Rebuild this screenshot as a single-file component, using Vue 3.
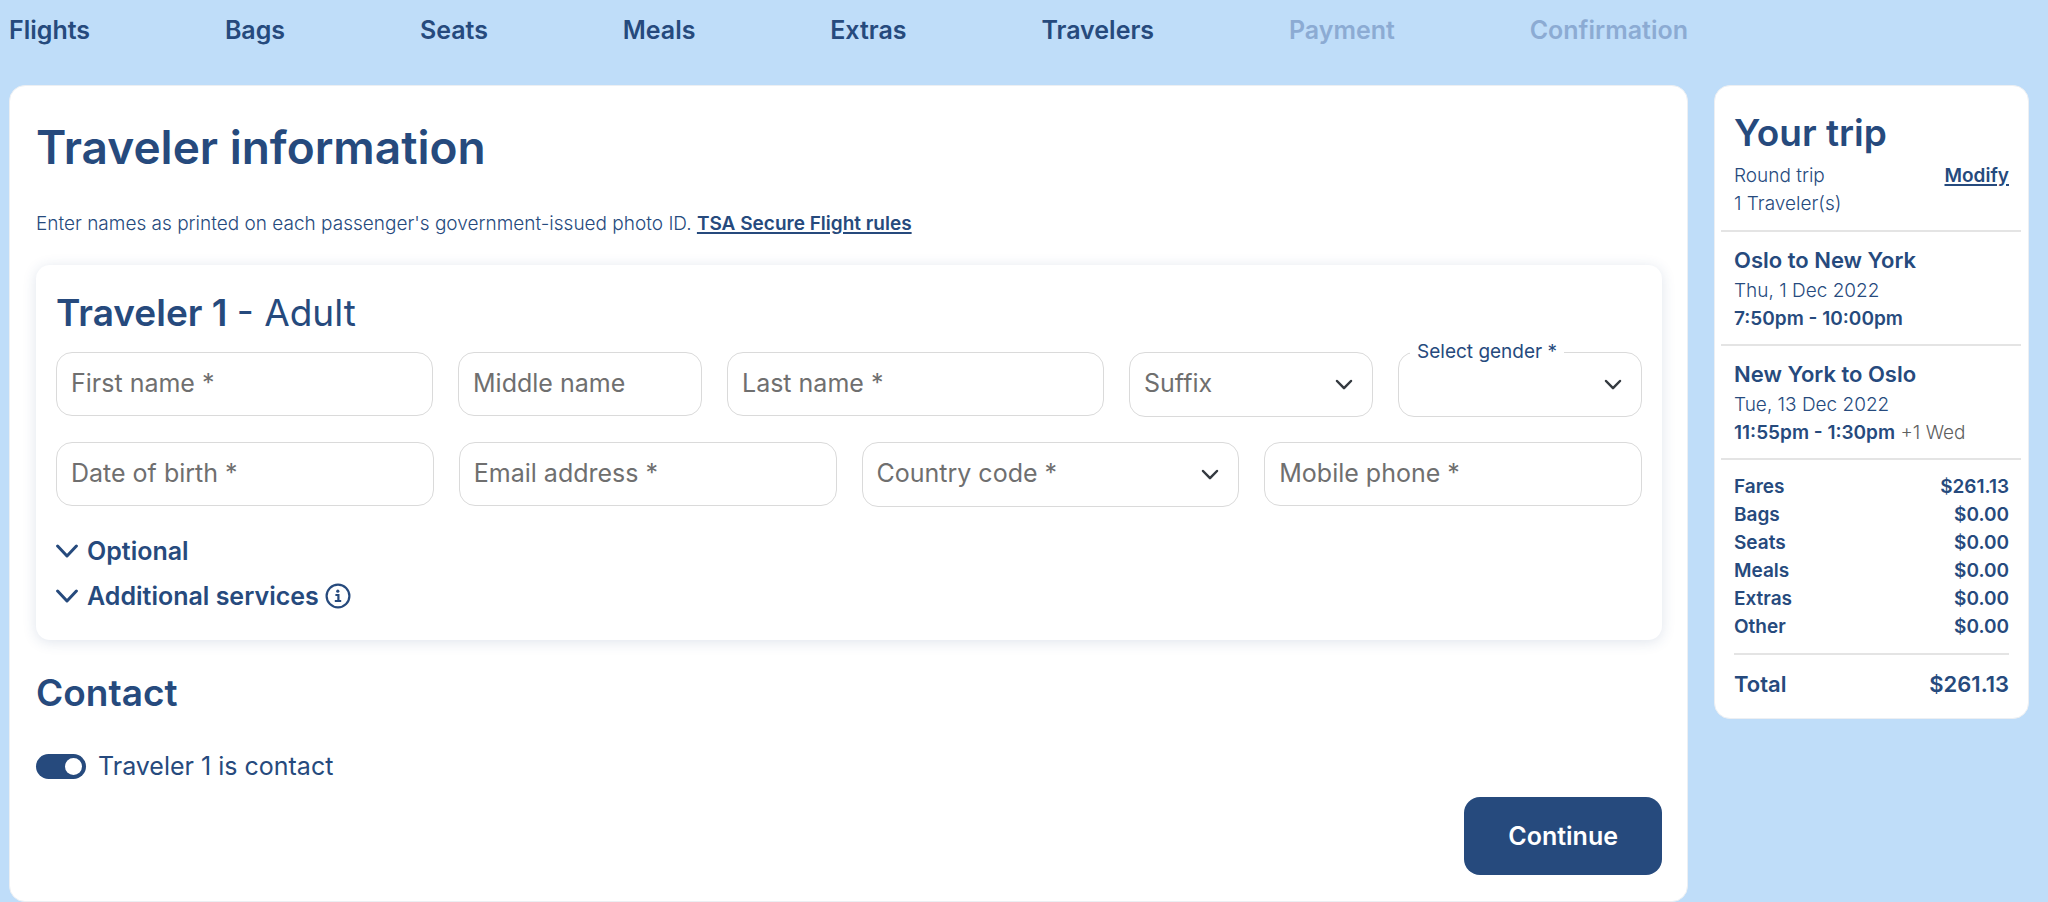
<script setup>
import { ref } from 'vue'

const steps = [
  { name: 'Flights', open: true },
  { name: 'Bags', open: true },
  { name: 'Seats', open: true },
  { name: 'Meals', open: true },
  { name: 'Extras', open: true },
  { name: 'Travelers', open: true },
  { name: 'Payment', open: false },
  { name: 'Confirmation', open: false },
]

const nameFields = [
  { id: 'first-name', label: 'First name *', type: 'text' },
  { id: 'middle-name', label: 'Middle name', type: 'text' },
  { id: 'last-name', label: 'Last name *', type: 'text' },
  { id: 'suffix', label: 'Suffix', options: ['Jr.', 'Sr.', 'II', 'III'] },
  { id: 'gender', label: 'Select gender *', options: ['Female', 'Male'], raised: true },
]

const contactFields = [
  { id: 'birth-date', label: 'Date of birth *', type: 'text' },
  { id: 'email', label: 'Email address *', type: 'email' },
  { id: 'country-code', label: 'Country code *', options: ['+1', '+44', '+47'] },
  { id: 'phone', label: 'Mobile phone *', type: 'tel' },
]

const rows = [
  { key: 'names', fields: nameFields },
  { key: 'contact', fields: contactFields },
]

const values = ref({
  'first-name': '', 'middle-name': '', 'last-name': '', suffix: '', gender: '',
  'birth-date': '', email: '', 'country-code': '', phone: '',
})

const isContact = ref(true)

const flights = [
  { route: 'Oslo to New York', date: 'Thu, 1 Dec 2022', time: '7:50pm - 10:00pm', extra: '' },
  { route: 'New York to Oslo', date: 'Tue, 13 Dec 2022', time: '11:55pm - 1:30pm', extra: '+1 Wed' },
]

const costs = [
  ['Fares', '$261.13'],
  ['Bags', '$0.00'],
  ['Seats', '$0.00'],
  ['Meals', '$0.00'],
  ['Extras', '$0.00'],
  ['Other', '$0.00'],
]
</script>

<template>
  <div class="page">
    <nav class="steps" aria-label="Booking steps">
      <template v-for="step in steps" :key="step.name">
        <a v-if="step.open" class="step" href="#">{{ step.name }}</a>
        <span v-else class="step step-locked">{{ step.name }}</span>
      </template>
    </nav>

    <main class="panel main">
      <h1>Traveler information</h1>
      <p class="intro">
        Enter names as printed on each passenger's government-issued photo ID.
        <a class="link" href="#">TSA Secure Flight rules</a>
      </p>

      <section class="traveler">
        <h2 class="traveler-title">Traveler 1 <span>- Adult</span></h2>

        <div v-for="row in rows" :key="row.key" class="row" :class="`row-${row.key}`">
          <div v-for="f in row.fields" :key="f.id" class="field">
            <template v-if="f.options">
              <select :id="f.id" v-model="values[f.id]" class="control control-select">
                <option value=""></option>
                <option v-for="o in f.options" :key="o" :value="o">{{ o }}</option>
              </select>
              <svg class="caret" viewBox="0 0 18 12" aria-hidden="true">
                <path d="M2 2 L9 9.2 L16 2" />
              </svg>
            </template>
            <input v-else :id="f.id" v-model="values[f.id]" class="control" :type="f.type" />
            <label :for="f.id" :class="{ raised: f.raised || values[f.id] }">{{ f.label }}</label>
          </div>
        </div>

        <div class="expanders">
          <button type="button" class="expander">
            <svg class="chevron" viewBox="0 0 22 14" aria-hidden="true"><path d="M1.6 2 L11 12 L20.4 2" /></svg>
            Optional
          </button>
          <div class="expander-line">
            <button type="button" class="expander">
              <svg class="chevron" viewBox="0 0 22 14" aria-hidden="true"><path d="M1.6 2 L11 12 L20.4 2" /></svg>
              Additional services
            </button>
            <button type="button" class="info" aria-label="About additional services">
              <svg viewBox="0 0 26 26" aria-hidden="true">
                <circle cx="13" cy="13" r="11.4" />
                <circle class="dot" cx="12.8" cy="8.2" r="1.6" />
                <path d="M10.4 12 H13.4 V18 M9.8 18 H16.2" />
              </svg>
            </button>
          </div>
        </div>
      </section>

      <h2 class="contact-title">Contact</h2>
      <label class="toggle" for="is-contact">
        <input id="is-contact" v-model="isContact" type="checkbox" />
        Traveler 1 is contact
      </label>
      <div class="actions">
        <button type="button" class="continue">Continue</button>
      </div>
    </main>

    <aside class="panel trip">
      <div class="trip-block trip-head">
        <h2>Your trip</h2>
        <div class="pair">
          <span>Round trip</span>
          <a class="link" href="#">Modify</a>
        </div>
        <div>1 Traveler(s)</div>
      </div>
      <div v-for="f in flights" :key="f.route" class="trip-block">
        <h3>{{ f.route }}</h3>
        <div>{{ f.date }}</div>
        <div><strong>{{ f.time }}</strong> <span v-if="f.extra" class="next-day">{{ f.extra }}</span></div>
      </div>
      <div class="trip-block trip-costs">
        <table>
          <tbody>
            <tr v-for="[name, amount] in costs" :key="name">
              <th scope="row">{{ name }}</th>
              <td>{{ amount }}</td>
            </tr>
          </tbody>
          <tfoot>
            <tr>
              <th scope="row">Total</th>
              <td>$261.13</td>
            </tr>
          </tfoot>
        </table>
      </div>
    </aside>
  </div>
</template>

<style>
body {
  margin: 0;
  background: #bfddf9;
}
</style>

<style scoped>
.page {
  --navy: #264a7d;
  --line: #e4e4e4;
  display: grid;
  grid-template-columns: minmax(0, 1fr) 315px;
  column-gap: 26px;
  align-items: start;
  padding: 0 19px 0 9px;
  color: var(--navy);
  font-family: Inter, "Liberation Sans", sans-serif;
  font-size: 19px;
  font-weight: 300;
  line-height: 28px;
}

.page *,
.page *::before {
  box-sizing: border-box;
}

h1,
h2,
h3,
p {
  margin: 0;
  font-weight: 600;
}

button {
  padding: 0;
  border: 0;
  background: none;
  color: inherit;
  font: inherit;
  cursor: pointer;
}

.steps {
  display: flex;
  justify-content: space-between;
  padding: 15px 0 40px;
  font-size: 25px;
  font-weight: 600;
  line-height: 30px;
}

.step {
  color: var(--navy);
  text-decoration: none;
}

.step-locked {
  color: #8cabd3;
}

.panel {
  grid-row: 2;
  border: 1px solid #eceff3;
  border-radius: 16px;
  background: #fff;
}

.main {
  padding: 32px 25px 26px 26px;
}

h1 {
  font-size: 46px;
  line-height: 58px;
}

.intro {
  margin: 34px 0 27px;
  font-weight: 300;
}

.link {
  color: var(--navy);
  font-weight: 600;
  text-decoration-thickness: 2px;
  text-underline-offset: 2px;
}

.traveler {
  padding: 24px 20px 29px;
  border-radius: 14px;
  box-shadow: 0 2px 14px rgba(38, 74, 125, 0.15);
}

.traveler-title {
  margin-bottom: 16px;
  font-size: 37px;
  line-height: 47px;
}

.traveler-title span {
  font-weight: 400;
}

.row {
  display: grid;
  gap: 25px;
  margin-bottom: 25px;
}

.row-names {
  grid-template-columns: 17fr 11fr 17fr 11fr 11fr;
}

.row-contact {
  grid-template-columns: repeat(4, 1fr);
}

.field {
  position: relative;
  display: flex;
  align-items: flex-start;
  height: 65px;
}

.control {
  width: 100%;
  height: 64px;
  padding: 0 15px;
  border: 1px solid #dadada;
  border-radius: 16px;
  background: #fff;
  color: var(--navy);
  font: inherit;
  font-size: 25px;
}

.control-select {
  height: 65px;
  appearance: none;
}

.field label {
  position: absolute;
  top: 16px;
  left: 15px;
  color: #6f6f6f;
  font-size: 25px;
  font-weight: 400;
  line-height: 30px;
  pointer-events: none;
}

.field .raised {
  top: -14px;
  left: 12px;
  padding: 0 7px;
  background: #fff;
  color: var(--navy);
  font-size: 19px;
  line-height: 28px;
}

.caret {
  position: absolute;
  top: 27px;
  right: 20px;
  width: 18px;
  height: 12px;
  fill: none;
  stroke: #343a40;
  stroke-width: 2.5;
  stroke-linecap: round;
  stroke-linejoin: round;
  pointer-events: none;
}

.expanders {
  display: grid;
  justify-items: start;
  gap: 15px;
  padding-top: 4px;
}

.expander {
  display: flex;
  align-items: center;
  gap: 9px;
  font-size: 25px;
  font-weight: 600;
  line-height: 30px;
}

.expander-line {
  display: flex;
  align-items: center;
  gap: 6px;
}

.chevron {
  width: 22px;
  height: 14px;
  fill: none;
  stroke: var(--navy);
  stroke-width: 3;
  stroke-linecap: round;
  stroke-linejoin: round;
}

.info {
  display: flex;
}

.info svg {
  width: 26px;
  height: 26px;
  fill: none;
  stroke: var(--navy);
  stroke-width: 2.2;
}

.info .dot {
  fill: var(--navy);
  stroke: none;
}

.contact-title {
  margin: 30px 0 35px;
  font-size: 37px;
  line-height: 46px;
}

.toggle {
  display: flex;
  align-items: center;
  gap: 12px;
  width: fit-content;
  font-size: 25px;
  font-weight: 400;
  line-height: 30px;
}

.toggle input {
  display: flex;
  align-items: center;
  width: 50px;
  height: 25px;
  margin: 0;
  padding: 0 4px;
  border-radius: 13px;
  background: #8cabd3;
  appearance: none;
}

.toggle input::before {
  width: 17px;
  height: 17px;
  border-radius: 50%;
  background: #fff;
  content: "";
}

.toggle input:checked {
  justify-content: flex-end;
  background: var(--navy);
}

.actions {
  display: flex;
  justify-content: flex-end;
  margin-top: 16px;
}

.continue {
  padding: 24px 44px;
  border-radius: 16px;
  background: var(--navy);
  color: #fff;
  font-size: 25px;
  font-weight: 600;
  line-height: 30px;
}

.trip {
  padding: 24px 7px 19px 6px;
}

.trip-block {
  padding: 13px 12px 11px 13px;
  border-top: 2px solid var(--line);
}

.trip-block h3 {
  margin-bottom: 2px;
  font-size: 22px;
  line-height: 30px;
}

.trip-head {
  padding-top: 0;
  padding-bottom: 12px;
  border-top: 0;
}

.trip-head h2 {
  margin-bottom: 6px;
  font-size: 37px;
  line-height: 46px;
}

.pair {
  display: flex;
  justify-content: space-between;
}

strong {
  font-weight: 600;
}

.next-day {
  color: #5f5f5f;
}

.trip-costs {
  padding-top: 13px;
  padding-bottom: 0;
}

table {
  width: 100%;
  border-collapse: collapse;
  font-weight: 600;
}

th,
td {
  padding: 0;
  font-weight: 600;
  text-align: left;
}

td {
  text-align: right;
}

tbody tr:last-child > * {
  padding-bottom: 12px;
}

tfoot th,
tfoot td {
  padding-top: 14px;
  border-top: 2px solid var(--line);
  font-size: 22px;
  line-height: 30px;
}
</style>
